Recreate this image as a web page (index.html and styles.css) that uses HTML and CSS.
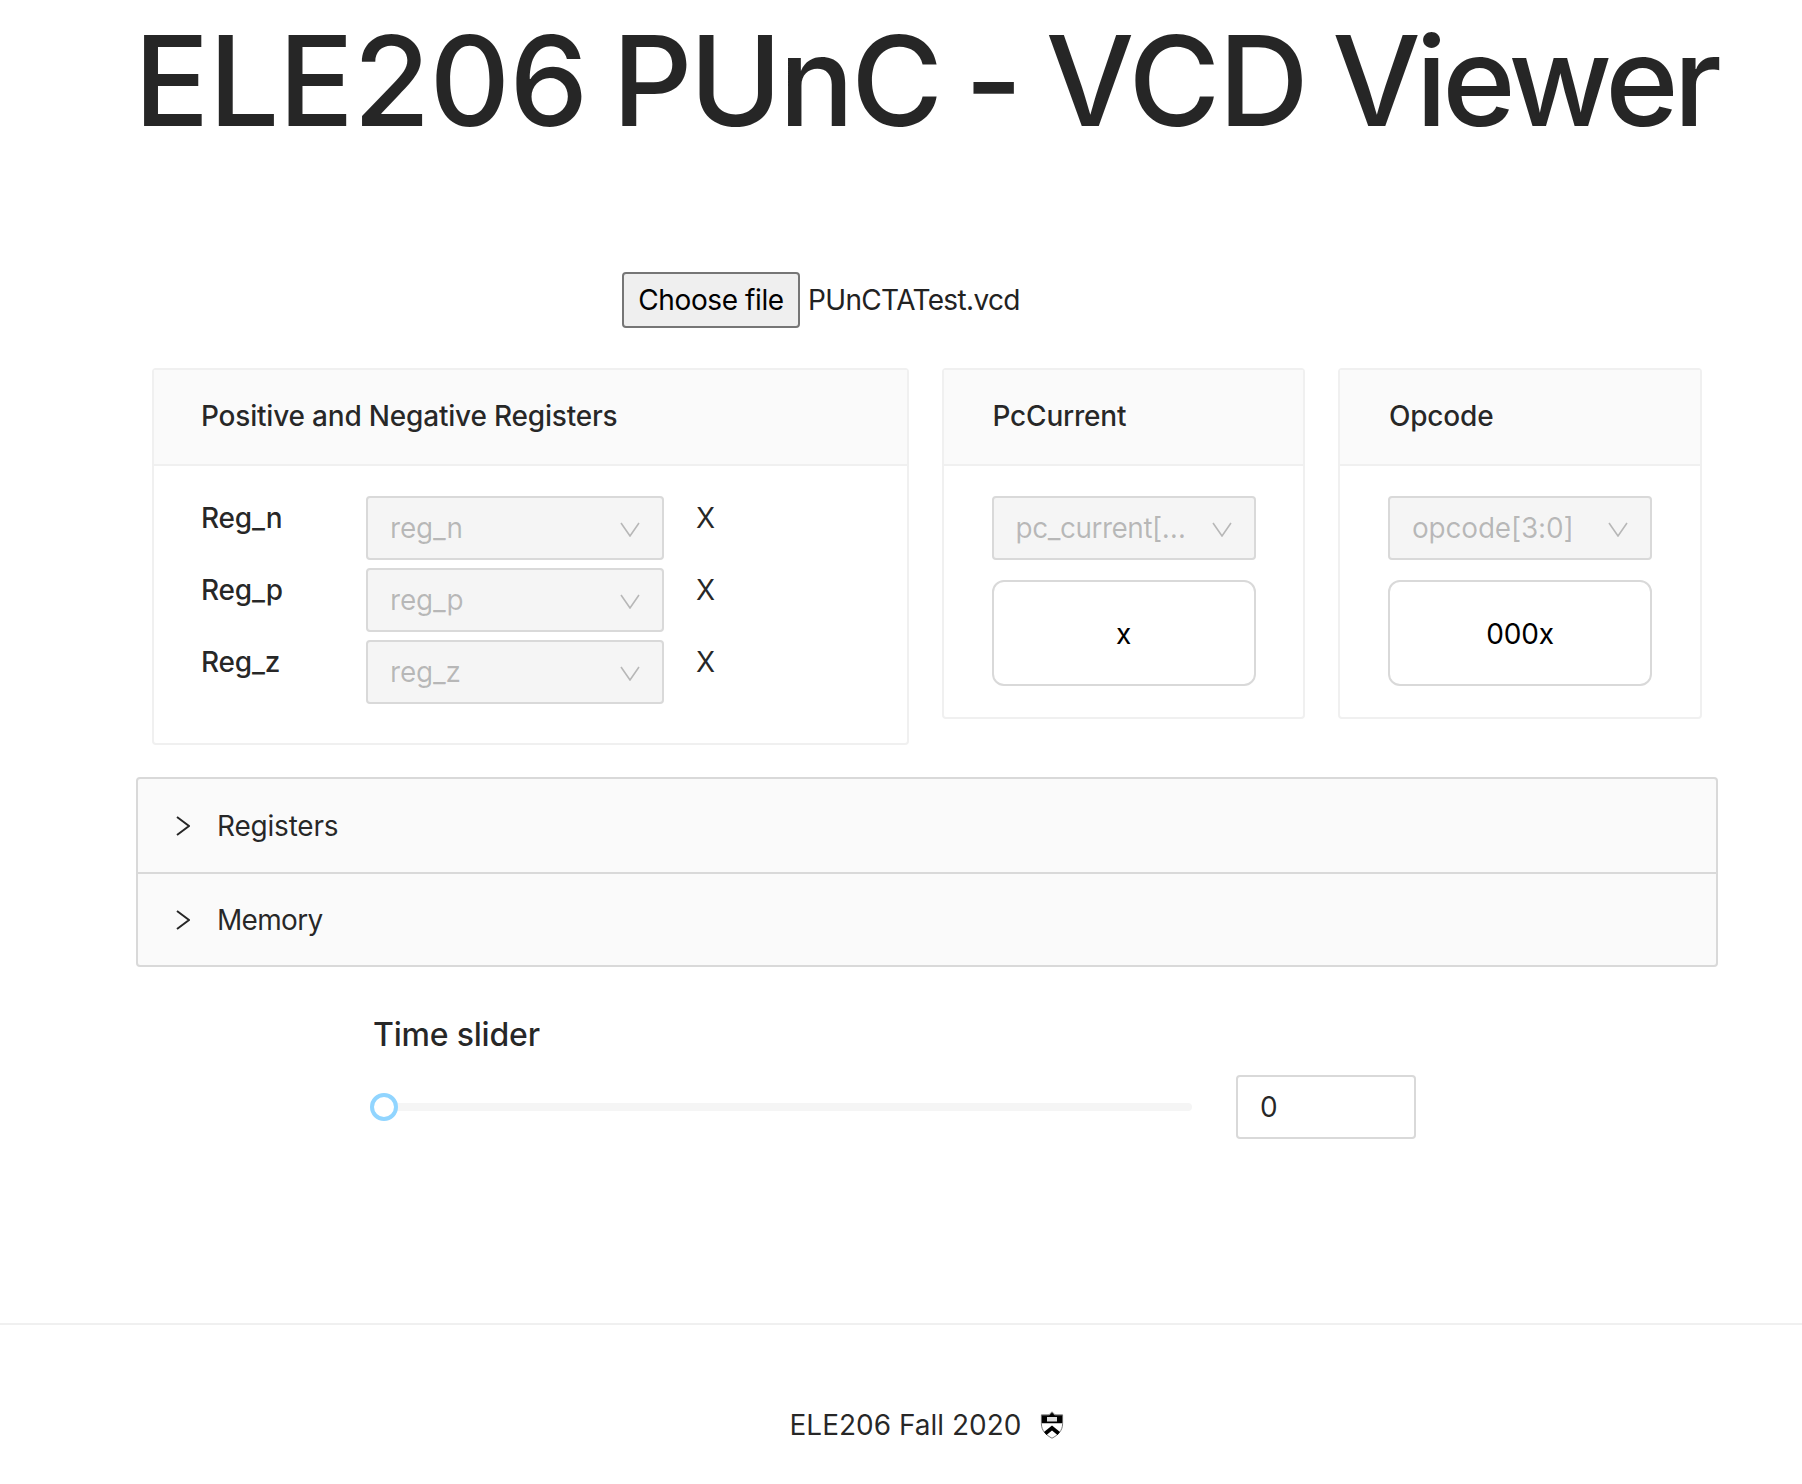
FILE: index.html
```html
<!DOCTYPE html>
<html lang="en">
<head>
<meta charset="utf-8">
<title>ELE206 PUnC - VCD Viewer</title>
<link rel="stylesheet" href="styles.css">
</head>
<body>
<main class="page">
  <h1 class="title"><span class="track-open">ELE206</span> <span class="track-tight">PUnC</span> - VCD <span class="track-tighter">Viewer</span></h1>
  <div class="file-row">
    <button class="file-btn" type="button">Choose file</button>
    <span class="file-name">PUnCTATest.vcd</span>
  </div>
  <section class="cards">
    <article class="card card-wide">
      <header class="card-head">Positive and Negative Registers</header>
      <div class="card-body reg-body">
        <div class="reg-row">
          <span class="reg-label">Reg_n</span>
          <div class="select select-reg"><span class="select-text">reg_n</span><svg class="chev" viewBox="0 0 20 15"><path d="M1 1l9 13 9-13"/></svg></div>
          <span class="reg-value">X</span>
        </div>
        <div class="reg-row">
          <span class="reg-label">Reg_p</span>
          <div class="select select-reg"><span class="select-text">reg_p</span><svg class="chev" viewBox="0 0 20 15"><path d="M1 1l9 13 9-13"/></svg></div>
          <span class="reg-value">X</span>
        </div>
        <div class="reg-row">
          <span class="reg-label">Reg_z</span>
          <div class="select select-reg"><span class="select-text">reg_z</span><svg class="chev" viewBox="0 0 20 15"><path d="M1 1l9 13 9-13"/></svg></div>
          <span class="reg-value">X</span>
        </div>
      </div>
    </article>
    <article class="card card-narrow">
      <header class="card-head">PcCurrent</header>
      <div class="card-body">
        <div class="select"><span class="select-text select-clipped">pc_current[…</span><svg class="chev" viewBox="0 0 20 15"><path d="M1 1l9 13 9-13"/></svg></div>
        <div class="value-box">x</div>
      </div>
    </article>
    <article class="card card-narrow">
      <header class="card-head">Opcode</header>
      <div class="card-body">
        <div class="select"><span class="select-text">opcode[3:0]</span><svg class="chev" viewBox="0 0 20 15"><path d="M1 1l9 13 9-13"/></svg></div>
        <div class="value-box">000x</div>
      </div>
    </article>
  </section>
  <section class="accordion">
    <div class="acc-item"><svg class="acc-arrow" viewBox="0 0 14 20"><path d="M1 1l12 9-12 9"/></svg><span>Registers</span></div>
    <div class="acc-item"><svg class="acc-arrow" viewBox="0 0 14 20"><path d="M1 1l12 9-12 9"/></svg><span class="acc-tight">Memory</span></div>
  </section>
  <section class="time">
    <div class="time-title">Time slider</div>
    <div class="time-row">
      <div class="slider"><span class="slider-handle"></span></div>
      <div class="time-input">0</div>
    </div>
  </section>
</main>
<footer class="footer">
  <span>ELE206 Fall 2020</span>
  <svg class="shield" viewBox="0 0 24 28">
    <path d="M12 .8l3 3h7.600v9c0 7-5 11.500-10.600 14.400C6.400 24.300 1.400 19.800 1.400 12.800v-9H9z" fill="#fff" stroke="#555" stroke-width=".8"/>
    <path d="M12 1.500l2.800 2.800h7.400v8H1.800v-8h7.400z" fill="#000"/>
    <rect x="7" y="6" width="10" height="4.500" fill="#ddd"/>
    <path d="M12 14.500l8 6.500-2.500 3-5.500-4.500-5.500 4.500L4 21z" fill="#000"/>
  </svg>
</footer>
</body>
</html>
```
FILE: styles.css
```css
* { box-sizing: border-box; }
html, body { margin: 0; padding: 0; background: #fff; }
body { font-family: Inter, "Liberation Sans", sans-serif; font-size: 28px; letter-spacing: -.2px; color: rgba(0,0,0,.85); width: 1802px; height: 1484px; overflow: hidden; }

.page { width: 1582px; margin-left: 136px; }
.title { margin: 0 0 0 -2px; height: 272px; padding-top: 6px; font-size: 125px; line-height: 150px; font-weight: 550; letter-spacing: -1.5px; word-spacing: -7px; white-space: nowrap; }
.track-open { letter-spacing: -.75px; }
.track-tight { letter-spacing: -3px; }
.track-tighter { letter-spacing: -5px; }

.file-row { display: flex; align-items: center; gap: 8px; margin-left: 486px; height: 56px; color: #222; letter-spacing: -.65px; }
.file-btn { width: 178px; height: 56px; padding: 0; background: #efefef; border: 2px solid #767676; border-radius: 4px; font: inherit; letter-spacing: -.4px; color: #000; }

.cards { display: flex; align-items: flex-start; gap: 33px; margin: 40px 16px 0; }
.card { border: 2px solid #f0f0f0; border-radius: 4px; background: #fff; }
.card-wide { width: 756.5px; height: 377px; }
.card-narrow { width: 363.5px; height: 351px; }
.card-head { height: 96px; padding: 0 49px 2px; display: flex; align-items: center; background: #fafafa; border-bottom: 2px solid #f0f0f0; font-size: 28px; font-weight: 500; white-space: nowrap; }
.card-body { padding: 30px 48px 0; }
.card-wide .card-head { padding-left: 47px; }
.reg-body { display: flex; flex-direction: column; gap: 8px; padding-left: 47px; }
.reg-row { display: flex; align-items: flex-start; height: 64px; }
.reg-label { width: 165px; margin-top: 2px; font-weight: 500; line-height: 40px; }
.reg-value { margin: 2px 0 0 32px; line-height: 40px; }

.select { display: flex; align-items: center; justify-content: space-between; width: 264px; height: 64px; padding: 0 22px; background: #f5f5f5; border: 2px solid #d9d9d9; border-radius: 4px; color: rgba(0,0,0,.25); }
.select-reg { width: 298px; }
.select-text { white-space: nowrap; }
.select-clipped { letter-spacing: -.5px; }
.chev { width: 20px; height: 15px; flex: none; margin-top: 2px; fill: none; stroke: rgba(0,0,0,.25); stroke-width: 1.6; }

.value-box { display: flex; align-items: center; justify-content: center; width: 264px; height: 106px; margin-top: 20px; border: 2px solid #d9d9d9; border-radius: 12px; color: #000; padding-top: 2px; }

.accordion { height: 190px; margin-top: 32px; background: #fafafa; border: 2px solid #d9d9d9; border-radius: 4px; }
.acc-item { display: flex; align-items: center; height: 93px; padding-left: 38px; }
.acc-item + .acc-item { border-top: 2px solid #d9d9d9; }
.acc-arrow { width: 14px; height: 20px; margin-right: 27px; fill: none; stroke: rgba(0,0,0,.85); stroke-width: 2; }
.acc-tight { letter-spacing: -.7px; }

.time { margin: 0 0 0 237px; padding-top: 48px; }
.time-title { font-size: 32px; font-weight: 500; line-height: 40px; }
.time-row { display: flex; align-items: center; margin-top: 20px; }
.slider { position: relative; width: 816px; height: 8px; background: #f5f5f5; border-radius: 4px; margin-left: 3px; }
.slider-handle { position: absolute; left: -6px; top: -10px; width: 28px; height: 28px; background: #fff; border: 4px solid #91d5ff; border-radius: 50%; }
.time-input { width: 180px; height: 64px; margin-left: 44px; padding-left: 22px; display: flex; align-items: center; border: 2px solid #d9d9d9; border-radius: 4px; }

.footer { position: absolute; left: 0; top: 1323px; width: 1802px; height: 161px; border-top: 2px solid #f0f0f0; display: flex; justify-content: center; align-items: center; gap: 19px; padding: 41px 0 0 52px; letter-spacing: 0; color: rgba(0,0,0,.85); }
.shield { width: 24px; height: 28px; }
```
